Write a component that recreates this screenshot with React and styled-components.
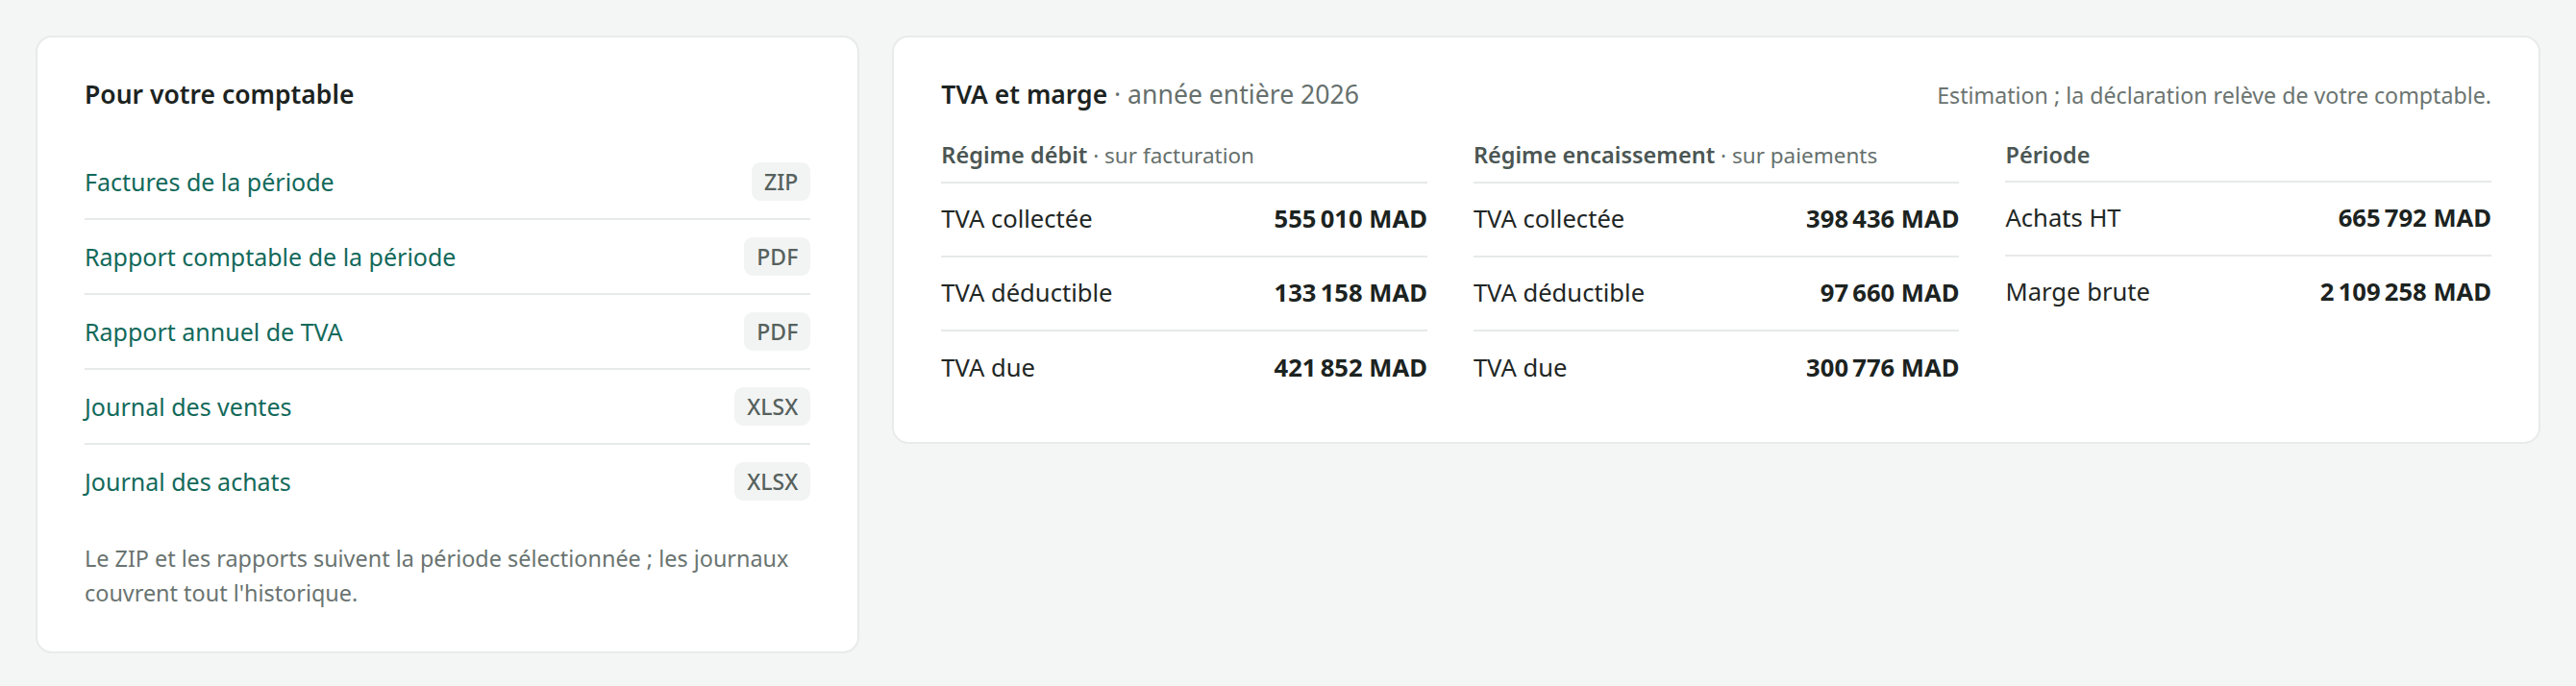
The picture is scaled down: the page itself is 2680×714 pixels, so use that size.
import React from "react";
import styled, { createGlobalStyle } from "styled-components";

const GlobalStyle = createGlobalStyle`
  body {
    margin: 0;
    background: #f4f6f5;
    font-family: "Noto Sans", "Open Sans", sans-serif;
    color: #1c2321;
  }
`;

const Page = styled.div`
  display: grid;
  grid-template-columns: 1fr 2fr;
  gap: 34px;
  align-items: start;
  padding: 37px;
`;

const Card = styled.section`
  background: #fff;
  border: 2px solid #e7ebe9;
  border-radius: 17px;
  padding: 41px 49px ${(p) => p.$bottom || "38px"};
`;

const CardTitle = styled.h2`
  margin: 0 0 ${(p) => p.$gap || "35px"};
  font-size: 26.5px;
  line-height: 36px;
  font-weight: 600;
  color: #1c2321;
`;

const Muted = styled.span`
  font-weight: 400;
  font-size: ${(p) => p.$size || "26.6px"};
  color: #66706d;
`;

const DocList = styled.ul`
  list-style: none;
  margin: 0;
  padding: 0;
`;

const DocRow = styled.li`
  display: flex;
  align-items: center;
  justify-content: space-between;
  padding: 18px 0;
  & + & {
    border-top: 2px solid #e6eae8;
  }
`;

const DocLink = styled.a`
  font-size: 25px;
  color: #12695a;
  text-decoration: none;
`;

const Badge = styled.span`
  height: 40px;
  line-height: 40px;
  padding: 0 13px;
  border-radius: 9px;
  background: #f2f4f3;
  color: #56615e;
  font-size: 23px;
  font-weight: 500;
`;

const Note = styled.p`
  margin: 24px 0 0;
  font-size: 23.4px;
  line-height: 36px;
  color: #6a7471;
`;

const HeadRow = styled.div`
  display: flex;
  justify-content: space-between;
  align-items: baseline;
  margin-bottom: 27px;
`;

const Estimate = styled.span`
  font-size: 23.2px;
  color: #6b7471;
`;

const Columns = styled.div`
  display: grid;
  grid-template-columns: repeat(3, 1fr);
  gap: 48px;
`;

const ColHeader = styled.div`
  font-size: 23.5px;
  line-height: 36px;
  font-weight: 600;
  color: #4b5653;
  padding-bottom: 8.5px;
  border-bottom: 2px solid #e6eae8;
`;

const StatRow = styled.div`
  display: flex;
  justify-content: space-between;
  padding: 18.5px 0;
  font-size: 25.6px;
  line-height: 38.4px;
  & + & {
    border-top: 2px solid #e6eae8;
  }
`;

const StatLabel = styled.span`
  color: #1f2725;
`;

const StatValue = styled.span`
  font-weight: 700;
  color: #1c2321;
`;

const docs = [
  { label: "Factures de la période", format: "ZIP" },
  { label: "Rapport comptable de la période", format: "PDF" },
  { label: "Rapport annuel de TVA", format: "PDF" },
  { label: "Journal des ventes", format: "XLSX" },
  { label: "Journal des achats", format: "XLSX" },
];

const nb = "\u202f";

const columns = [
  {
    title: "Régime débit",
    sub: "sur facturation",
    rows: [
      ["TVA collectée", `555${nb}010 MAD`],
      ["TVA déductible", `133${nb}158 MAD`],
      ["TVA due", `421${nb}852 MAD`],
    ],
  },
  {
    title: "Régime encaissement",
    sub: "sur paiements",
    rows: [
      ["TVA collectée", `398${nb}436 MAD`],
      ["TVA déductible", `97${nb}660 MAD`],
      ["TVA due", `300${nb}776 MAD`],
    ],
  },
  {
    title: "Période",
    rows: [
      ["Achats HT", `665${nb}792 MAD`],
      ["Marge brute", `2${nb}109${nb}258 MAD`],
    ],
  },
];

const App = () => {
  return (
    <>
      <GlobalStyle />
      <Page>
        <Card $bottom="43px">
          <CardTitle>Pour votre comptable</CardTitle>
          <DocList>
            {docs.map((doc) => (
              <DocRow key={doc.label}>
                <DocLink href="#">{doc.label}</DocLink>
                <Badge>{doc.format}</Badge>
              </DocRow>
            ))}
          </DocList>
          <Note>
            Le ZIP et les rapports suivent la période sélectionnée ; les
            journaux couvrent tout l'historique.
          </Note>
        </Card>

        <Card $bottom="39px">
          <HeadRow>
            <CardTitle $gap="0">
              TVA et marge <Muted>· année entière 2026</Muted>
            </CardTitle>
            <Estimate>
              Estimation ; la déclaration relève de votre comptable.
            </Estimate>
          </HeadRow>
          <Columns>
            {columns.map((col) => (
              <div key={col.title}>
                <ColHeader>
                  {col.title}
                  {col.sub && <Muted $size="22.5px"> · {col.sub}</Muted>}
                </ColHeader>
                {col.rows.map(([label, value]) => (
                  <StatRow key={label}>
                    <StatLabel>{label}</StatLabel>
                    <StatValue>{value}</StatValue>
                  </StatRow>
                ))}
              </div>
            ))}
          </Columns>
        </Card>
      </Page>
    </>
  );
};

export default App;
